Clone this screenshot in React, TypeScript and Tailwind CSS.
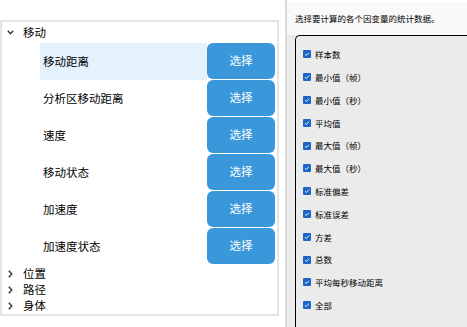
import React from "react";

const children = ["移动距离", "分析区移动距离", "速度", "移动状态", "加速度", "加速度状态"];
const stats = [
  "样本数",
  "最小值（帧）",
  "最小值（秒）",
  "平均值",
  "最大值（帧）",
  "最大值（秒）",
  "标准偏差",
  "标准误差",
  "方差",
  "总数",
  "平均每秒移动距离",
  "全部",
];

function ChevronDown() {
  return (
    <svg width="7" height="5" viewBox="0 0 7 5" className="block">
      <path d="M0.8 0.8 L3.5 3.8 L6.2 0.8" fill="none" stroke="#333" strokeWidth="1.4" />
    </svg>
  );
}

function ChevronRight() {
  return (
    <svg width="5" height="8" viewBox="0 0 5 8" className="block">
      <path d="M0.8 0.8 L3.8 4 L0.8 7.2" fill="none" stroke="#333" strokeWidth="1.4" />
    </svg>
  );
}

function Check() {
  return (
    <div className="w-[8px] h-[8px] rounded-[1px] bg-[#1a66c2] flex items-center justify-center shrink-0">
      <svg width="6" height="6" viewBox="0 0 6 6" className="block">
        <path d="M1 3.2 L2.4 4.5 L5 1.6" fill="none" stroke="white" strokeWidth="0.9" />
      </svg>
    </div>
  );
}

export default function App() {
  return (
    <div
      className="w-[467px] h-[327px] flex bg-white overflow-hidden text-black"
      style={{ fontFamily: '"Noto Sans CJK SC", "Noto Sans", sans-serif' }}
    >
      <div className="w-[285px] shrink-0 pt-[20px]">
        <div className="w-[279px] h-[296px] border-2 border-[#e5e5e5] flex flex-col text-[11.5px]">
          <div className="h-[21px] flex items-center">
            <div className="w-[21px] pl-[5px] flex items-center">
              <ChevronDown />
            </div>
            <span className="leading-none">移动</span>
          </div>
          {children.map((c, i) => (
            <div key={c} className="flex h-[37px] ml-[38px]">
              <div
                className={
                  "flex-1 flex items-center pl-[3px] " + (i === 0 ? "bg-[#e4f2fd]" : "")
                }
              >
                <span className="leading-none">{c}</span>
              </div>
              <button className="w-[68px] h-[36px] mr-[2px] rounded-[6px] bg-[#3a98da] text-white text-[11.5px] flex items-center justify-center">
                选择
              </button>
            </div>
          ))}
          <div className="pt-[1px]">
            {["位置", "路径", "身体"].map((t) => (
              <div key={t} className="h-[16px] flex items-center">
                <div className="w-[21px] pl-[6px] flex items-center">
                  <ChevronRight />
                </div>
                <span className="leading-none">{t}</span>
              </div>
            ))}
          </div>
        </div>
      </div>
      <div className="w-[2px] shrink-0 bg-[#d9d9d9]" />
      <div className="flex-1 flex flex-col">
        <div className="h-[35px] shrink-0 bg-[#f9f9f9] border-t-2 border-white pl-[8px] flex items-center text-[8.5px] leading-none">
          选择要计算的各个因变量的统计数据。
        </div>
        <div className="flex-1 bg-[#ebebeb] pl-[8px] flex flex-col">
          <div className="flex-1 border-l border-t border-black rounded-tl-[5px] pt-[7px] pl-[7px]">
            {stats.map((s) => (
              <div key={s} className="h-[22.8px] flex items-center gap-[4px]">
                <Check />
                <span className="text-[8.5px] leading-none">{s}</span>
              </div>
            ))}
          </div>
        </div>
      </div>
    </div>
  );
}
